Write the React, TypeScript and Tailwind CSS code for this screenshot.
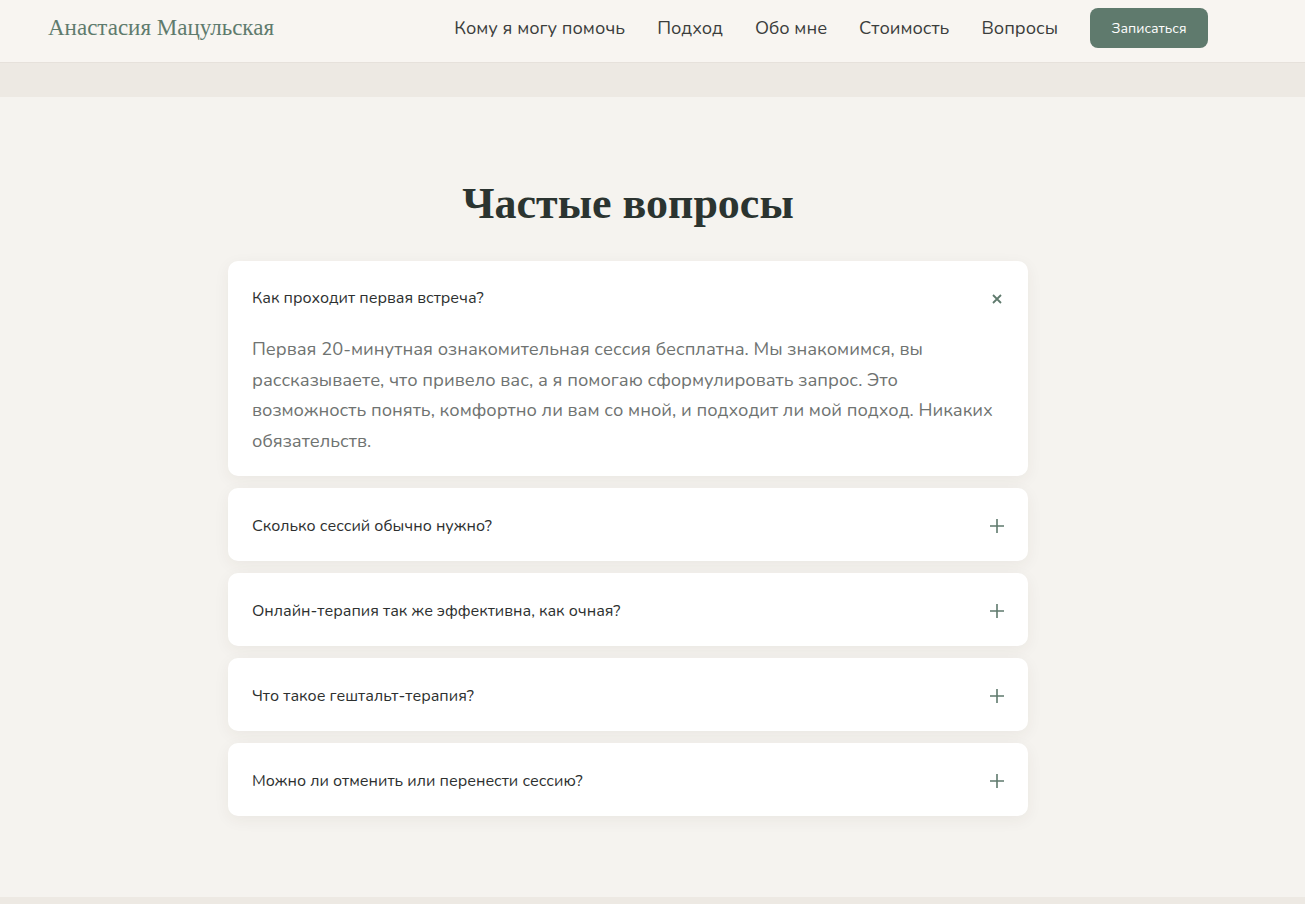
import { useState } from "react";

// ─── Data ─────────────────────────────────────────────────────────────────────

const NAV = ["Кому я могу помочь", "Подход", "Обо мне", "Стоимость", "Вопросы"];

const FAQ = [
  {
    q: "Как проходит первая встреча?",
    a: "Первая 20-минутная ознакомительная сессия бесплатна. Мы знакомимся, вы рассказываете, что привело вас, а я помогаю сформулировать запрос. Это возможность понять, комфортно ли вам со мной, и подходит ли мой подход. Никаких обязательств.",
  },
  { q: "Сколько сессий обычно нужно?", a: "" },
  { q: "Онлайн-терапия так же эффективна, как очная?", a: "" },
  { q: "Что такое гештальт-терапия?", a: "" },
  { q: "Можно ли отменить или перенести сессию?", a: "" },
];

const sans = "font-['Nunito','Noto_Sans','Lato',sans-serif]";
const serif = "font-['Liberation_Serif','DejaVu_Serif',serif]";

// ─── Header ───────────────────────────────────────────────────────────────────

function Header() {
  return (
    <header className="h-[63px] bg-[#f8f5f1] border-b border-[#e6e1db]">
      <div className="w-[1256px] h-14 flex items-center justify-between px-12">
        <span className={`${serif} text-[23px] text-[#5f7b6d] pt-px`}>Анастасия Мацульская</span>
        <nav className={`${sans} flex items-center gap-8`}>
          {NAV.map((n) => (
            <a key={n} className="text-[18.3px] text-[#3b3d3c] pt-0.5">{n}</a>
          ))}
          <button className="h-10 w-[118px] rounded-lg bg-[#5f7a6d] text-white text-[14px]">Записаться</button>
        </nav>
      </div>
    </header>
  );
}

// ─── FAQ item ─────────────────────────────────────────────────────────────────

function Item({ q, a, open, onToggle }: { q: string; a: string; open: boolean; onToggle: () => void }) {
  return (
    <div className="rounded-[10px] bg-white shadow-[0_4px_16px_rgba(60,55,40,0.06)]">
      <button onClick={onToggle} className="w-full h-[73px] flex items-center justify-between px-6 text-left">
        <span className="text-[16.1px] text-[#2d302f] pt-0.5">{q}</span>
        <span className="w-[14px] flex justify-center text-[#5f7a6d] pt-0.5">
          {open ? (
            <svg width="12" height="12" viewBox="0 0 12 12"><path d="M2 2l8 8M10 2l-8 8" stroke="currentColor" strokeWidth="1.8" /></svg>
          ) : (
            <svg width="14" height="14" viewBox="0 0 14 14"><path d="M7 0v14M0 7h14" stroke="currentColor" strokeWidth="1.6" /></svg>
          )}
        </span>
      </button>
      {open && (
        <p className="pl-6 pr-8 pb-5 text-[18.35px] leading-[30.6px] text-[#6f7371]">{a}</p>
      )}
    </div>
  );
}

// ─── Page ─────────────────────────────────────────────────────────────────────

export default function App() {
  const [open, setOpen] = useState(0);

  return (
    <div className={`${sans} min-h-[904px] bg-[#f5f3ef]`}>
      <Header />
      <div className="h-[34px] bg-[#ede9e3]" />

      <section className="w-[1256px] pt-[83px] pb-[81px]">
        <h2 className={`${serif} text-center text-[44px] leading-[48px] font-bold text-[#2b3430]`}>Частые вопросы</h2>
        <div className="mx-auto mt-[33px] w-[800px] flex flex-col gap-3">
          {FAQ.map((f, i) => (
            <Item key={f.q} q={f.q} a={f.a} open={open === i} onToggle={() => setOpen(open === i ? -1 : i)} />
          ))}
        </div>
      </section>

      <div className="h-[7px] bg-[#ede9e3]" />
    </div>
  );
}
